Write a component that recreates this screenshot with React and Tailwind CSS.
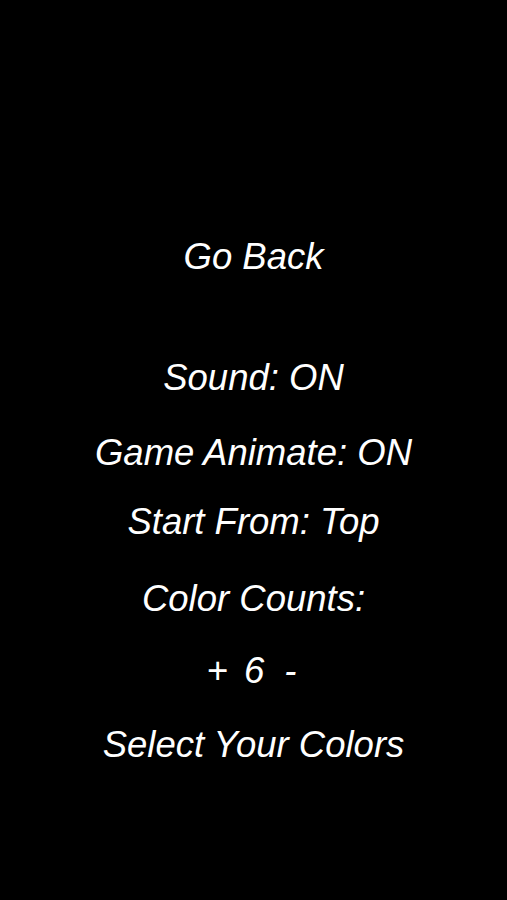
const rows = [
  { label: "Sound: ON", mt: "mt-[81px]" },
  { label: "Game Animate: ON", mt: "mt-[35px]" },
  { label: "Start From: Top", mt: "mt-[29px]" },
  { label: "Color Counts:", mt: "mt-[37px]" },
];

export default function App() {
  return (
    <div
      className="min-h-[900px] w-full bg-black text-white italic flex flex-col items-center pt-[237px]"
      style={{ fontFamily: '"Liberation Sans", Arial, sans-serif' }}
    >
      <button className="text-[36.5px] leading-[40px] italic">Go Back</button>
      {rows.map((row) => (
        <div
          key={row.label}
          className={`text-[36.5px] leading-[40px] whitespace-pre ${row.mt}`}
        >
          {row.label}
        </div>
      ))}

      {/* color count stepper */}
      <div className="mt-[32px] flex flex-row pr-[4px] text-[36.5px] leading-[40px]">
        <button className="italic">+</button>
        <span className="ml-[16px]">6</span>
        <button className="ml-[20px] italic">-</button>
      </div>

      <button className="mt-[34px] text-[36.5px] leading-[40px] italic">
        Select Your Colors
      </button>
    </div>
  );
}
